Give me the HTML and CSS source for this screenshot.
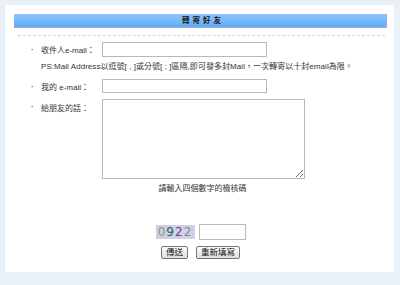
FILE: index.html
```html
<!DOCTYPE html>
<html lang="zh-Hant">
<head>
<meta charset="utf-8">
<link rel="stylesheet" href="styles.css">
</head>
<body>
<div class="panel">
  <div class="header">轉寄好友</div>
  <div class="divider"></div>
  <form class="form">
    <div class="row">
      <span class="bullet">·</span>
      <label class="label">收件人e-mail：</label>
      <input class="field" type="text">
    </div>
    <div class="note">PS:Mail Address以逗號[ , ]或分號[ ; ]區隔,即可發多封Mail，一次轉寄以十封email為限。</div>
    <div class="row row2">
      <span class="bullet">·</span>
      <label class="label">我的 e-mail：</label>
      <input class="field" type="text">
    </div>
    <div class="row row3">
      <span class="bullet">·</span>
      <label class="label">給朋友的話：</label>
      <textarea class="area"></textarea>
    </div>
    <div class="hint">請輸入四個數字的檢核碼</div>
    <div class="captcha-row">
      <span class="captcha"><span class="d1">0</span><span class="d2">9</span><span class="d3">2</span><span class="d4">2</span></span>
      <input class="code" type="text">
    </div>
    <div class="buttons">
      <button type="button" class="btn">傳送</button>
      <button type="button" class="btn">重新填寫</button>
    </div>
  </form>
</div>
</body>
</html>
```
FILE: styles.css
```css
html, body {
  margin: 0;
  padding: 0;
}
body {
  width: 400px;
  height: 285px;
  background: #e9f1f8;
  font-family: "Liberation Sans", "Noto Sans CJK TC", sans-serif;
  font-size: 8px;
  color: #333;
  padding: 5px 6px 0 5px;
  box-sizing: border-box;
}
.panel {
  background: #fff;
  height: 267px;
  padding: 9px 7px 0 9px;
  box-sizing: border-box;
}
.header {
  height: 14px;
  background: linear-gradient(#8ec5fc, #62acf8);
  border-right: 1px solid #9eb0c0;
  border-bottom: 1px solid #9eb0c0;
  box-sizing: border-box;
  text-align: center;
  font-weight: bold;
  font-size: 7.5px;
  letter-spacing: 3px;
  line-height: 14px;
  color: #1a1a1a;
  padding-left: 6px;
}
.divider {
  margin: 7px 2px 0 4px;
  border-top: 1px dashed #d6d6d6;
}
.form {
  display: flex;
  flex-direction: column;
}
.row {
  display: flex;
  align-items: center;
  margin-top: 6px;
  height: 15px;
}
.bullet {
  flex: none;
  width: 27px;
  padding-left: 17px;
  box-sizing: border-box;
  font-weight: bold;
  color: #555;
}
.label {
  flex: none;
  width: 61px;
  color: #333;
}
.field {
  width: 165px;
  height: 15px;
  box-sizing: border-box;
  border: 1px solid #b8b8b8;
  margin: 0;
  padding: 0;
  background: #fff;
}
.note {
  margin-top: 5px;
  padding-left: 27px;
  line-height: 10px;
  height: 10px;
  white-space: nowrap;
  letter-spacing: 0.05px;
  color: #333;
}
.row2 {
  margin-top: 7px;
  height: 14px;
}
.row2 .field {
  height: 14px;
}
.row3 {
  align-items: flex-start;
  margin-top: 6px;
  height: 80px;
}
.row3 .bullet, .row3 .label {
  margin-top: 3px;
}
.area {
  width: 203px;
  height: 80px;
  box-sizing: border-box;
  border: 1px solid #b8b8b8;
  margin: 0;
  padding: 0;
  resize: both;
}
.hint {
  margin-top: 5px;
  text-align: center;
  padding-left: 4px;
  line-height: 10px;
}
.captcha-row {
  display: flex;
  justify-content: center;
  align-items: center;
  gap: 4px;
  margin-top: 30px;
  height: 16px;
}
.captcha {
  display: inline-flex;
  align-items: center;
  justify-content: center;
  width: 39px;
  height: 14px;
  background: #cfcfe6;
  font-family: "DejaVu Sans", sans-serif;
  font-size: 12px;
  letter-spacing: 1px;
  line-height: 14px;
}
.d1 { color: #8d9a76; }
.d2 { color: #2f5c66; }
.d3 { color: #7a3f8a; }
.d4 { color: #8a8a8a; }
.code {
  width: 47px;
  height: 16px;
  box-sizing: border-box;
  border: 1px solid #b8b8b8;
  margin: 0;
  padding: 0;
}
.buttons {
  display: flex;
  justify-content: center;
  gap: 8px;
  margin-top: 6px;
}
.btn {
  height: 13px;
  padding: 0 4px;
  margin: 0;
  font-family: "Liberation Sans", "Noto Sans CJK TC", sans-serif;
  font-size: 8.5px;
  line-height: 11px;
  border: 1px solid #777;
  border-radius: 2px;
  background: linear-gradient(#fdfdfd, #dcdcdc);
  color: #111;
}
```
